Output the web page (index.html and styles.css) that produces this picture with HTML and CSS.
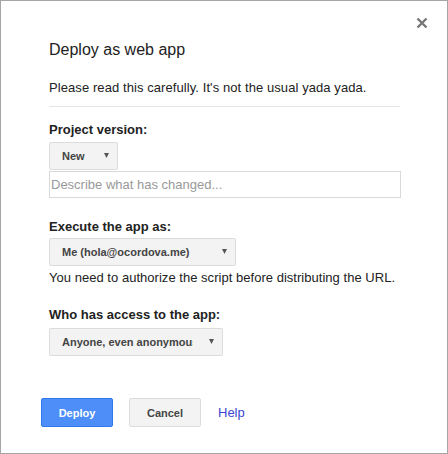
FILE: index.html
```html
<!DOCTYPE html>
<html>
<head>
<meta charset="utf-8">
<link rel="stylesheet" href="styles.css">
</head>
<body>
<div class="dialog">
  <button class="close" aria-label="Close">
    <svg width="12" height="12" viewBox="0 0 12 12"><path d="M1.5 1.5L10.5 10.5M10.5 1.5L1.5 10.5" stroke="#777" stroke-width="2.4" fill="none"/></svg>
  </button>
  <h1 class="title">Deploy as web app</h1>
  <p class="intro">Please read this carefully. It's not the usual yada yada.</p>
  <div class="sep"></div>

  <div class="label label-first">Project version:</div>
  <div class="select select-new select-first">
    <span class="caption">New</span>
    <svg class="arrow" width="5" height="5" viewBox="0 0 5 5"><path d="M0 0H5L2.5 5Z" fill="#555"/></svg>
  </div>
  <div class="input">Describe what has changed...</div>

  <div class="label">Execute the app as:</div>
  <div class="select select-me">
    <span class="caption">Me (hola@ocordova.me)</span>
    <svg class="arrow" width="5" height="5" viewBox="0 0 5 5"><path d="M0 0H5L2.5 5Z" fill="#555"/></svg>
  </div>
  <p class="hint">You need to authorize the script before distributing the URL.</p>

  <div class="label">Who has access to the app:</div>
  <div class="select select-anyone">
    <span class="caption">Anyone, even anonymous</span>
    <svg class="arrow" width="5" height="5" viewBox="0 0 5 5"><path d="M0 0H5L2.5 5Z" fill="#555"/></svg>
  </div>

  <div class="buttons">
    <button class="btn btn-primary">Deploy</button>
    <button class="btn btn-secondary">Cancel</button>
    <a class="help" href="#">Help</a>
  </div>
</div>
</body>
</html>
```
FILE: styles.css
```css
html, body {
  margin: 0;
  padding: 0;
  background: #fff;
}
body {
  font-family: "Liberation Sans", Arial, sans-serif;
}
.dialog {
  position: relative;
  width: 448px;
  height: 454px;
  box-sizing: border-box;
  border: 1px solid #a6a6a6;
  background: #fff;
  padding: 40px 46px 0 48px;
  color: #222;
}
.close {
  position: absolute;
  top: 16px;
  right: 19px;
  width: 12px;
  height: 12px;
  padding: 0;
  margin: 0;
  border: 0;
  background: transparent;
  display: block;
}
.close svg {
  display: block;
}
.title {
  margin: 0;
  font-size: 16px;
  line-height: 18px;
  font-weight: normal;
  color: #222;
}
.intro {
  margin: 21px 0 0;
  font-size: 13px;
  line-height: 16px;
  letter-spacing: 0.08px;
}
.sep {
  margin: 10px 1px 0 0;
  border-top: 1px solid #e5e5e5;
}
.label {
  margin-top: 21px;
  font-size: 13px;
  line-height: 16px;
  font-weight: bold;
  color: #222;
}
.label-first {
  margin-top: 15px;
}
.select {
  box-sizing: border-box;
  height: 28px;
  margin-top: 4px;
  display: flex;
  align-items: center;
  padding: 0 8px 0 12px;
  background: #f3f3f3;
  border: 1px solid #dcdcdc;
  border-radius: 2px;
  font-size: 11px;
  font-weight: bold;
  color: #444;
}
.caption {
  flex: 1;
  overflow: hidden;
  white-space: nowrap;
}
.arrow {
  flex: none;
  display: block;
  margin-left: 6px;
  margin-top: -2px;
}
.select-new {
  width: 69px;
}
.select-me {
  width: 187px;
  margin-top: 3px;
}
.select-anyone {
  width: 174px;
  margin-top: 5px;
}
.select-anyone .caption {
  flex: none;
  width: 131px;
  margin-right: 10px;
}
.input {
  box-sizing: border-box;
  height: 27px;
  margin-top: 1px;
  border: 1px solid #d9d9d9;
  padding: 0 1px;
  font-size: 13px;
  line-height: 25px;
  color: #999;
}
.hint {
  margin: 4px 0 0;
  font-size: 13px;
  line-height: 16px;
  letter-spacing: 0.03px;
}
.buttons {
  display: flex;
  align-items: center;
  margin: 42px 0 0 -8px;
}
.btn {
  box-sizing: border-box;
  width: 72px;
  height: 29px;
  margin: 0;
  padding: 0;
  border-radius: 2px;
  font-family: "Liberation Sans", Arial, sans-serif;
  font-size: 11px;
  font-weight: bold;
}
.btn-primary {
  background: #4d8ef8;
  border: 1px solid #3079ed;
  color: #fff;
}
.btn-secondary {
  margin-left: 16px;
  background: #f3f3f3;
  border: 1px solid #dcdcdc;
  color: #444;
}
.help {
  margin-left: 17px;
  font-size: 13px;
  color: #3b46d2;
  text-decoration: none;
}
```
